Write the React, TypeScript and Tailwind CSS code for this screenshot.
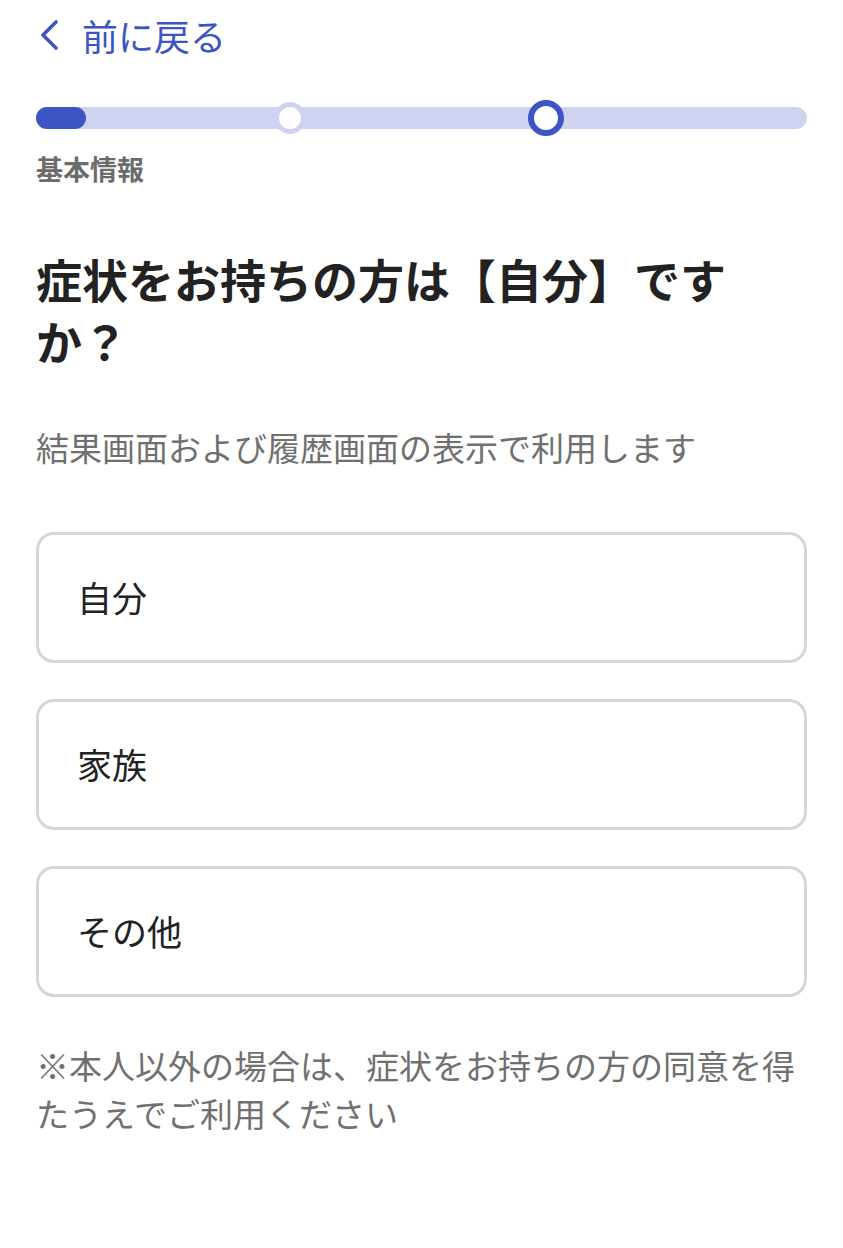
const options = ['自分', '家族', 'その他'];

export default function App() {
  return (
    <div
      className="min-h-[1248px] bg-white px-[36px] text-[#222222]"
      style={{ fontFamily: '"Noto Sans CJK JP", "Noto Sans", sans-serif' }}
    >
      {/* Back link */}
      <div className="flex h-[70px] items-center gap-[22px] text-[#3c54c4]">
        <svg width="22" height="32" viewBox="0 0 22 32" fill="none" className="ml-[2px]">
          <polyline
            points="18,3 5,16 18,29"
            stroke="currentColor"
            strokeWidth="3.6"
            strokeLinecap="round"
            strokeLinejoin="round"
          />
        </svg>
        <span className="text-[36px] leading-none">前に戻る</span>
      </div>

      {/* Progress */}
      <div className="relative mt-[31px] flex h-[34px] items-center">
        <div className="h-[22px] w-full rounded-full bg-[#cfd3f1]">
          <div className="h-full w-[50px] rounded-full bg-[#3c54c4]" />
        </div>
        <div className="absolute left-[33%] top-1/2 h-[32px] w-[32px] -translate-x-1/2 -translate-y-1/2 rounded-full border-[5px] border-[#cfd3f1] bg-white" />
        <div className="absolute left-[66.1%] top-1/2 h-[36px] w-[36px] -translate-x-1/2 -translate-y-1/2 rounded-full border-[6px] border-[#3c54c4] bg-white" />
      </div>
      <div className="mt-[14px] text-[27px] font-bold leading-[40px] text-[#6b6b6b]">基本情報</div>

      {/* Question */}
      <h1 className="mt-[58px] pr-[40px] text-[46px] font-bold leading-[62px] text-[#222222]">
        症状をお持ちの方は【自分】ですか？
      </h1>
      <p className="mt-[52px] text-[33px] leading-[48px] text-[#707070]">
        結果画面および履歴画面の表示で利用します
      </p>

      {/* Options */}
      <div className="mt-[61px] flex flex-col gap-[36px]">
        {options.map((o) => (
          <button
            key={o}
            className="flex h-[131px] w-full items-center rounded-[18px] border-[3px] border-[#d6d6d8] bg-white px-[38px] text-left text-[35px] text-[#222222]"
          >
            {o}
          </button>
        ))}
      </div>

      <p className="mt-[44px] pr-[8px] text-[33px] leading-[48px] text-[#707070]">
        ※本人以外の場合は、症状をお持ちの方の同意を得たうえでご利用ください
      </p>
    </div>
  );
}
